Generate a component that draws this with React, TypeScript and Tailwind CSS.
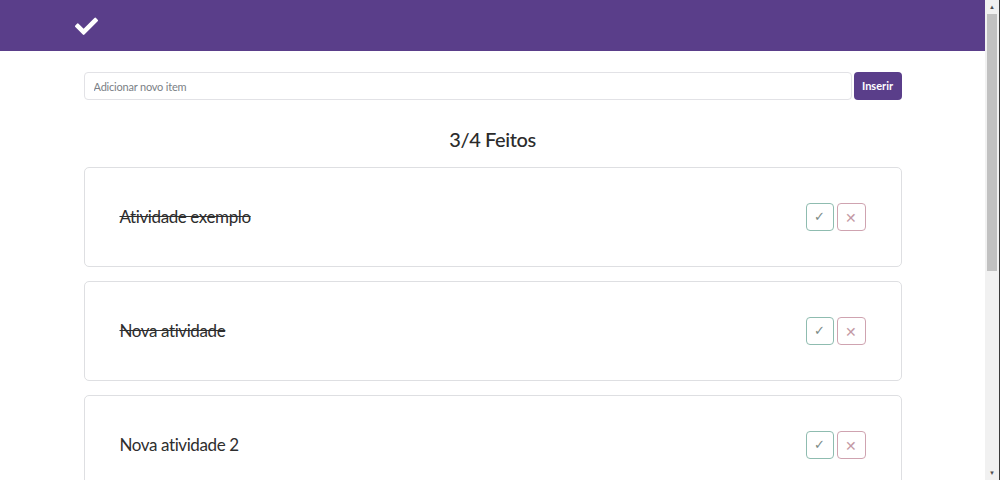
import { useState } from "react";

type Item = {
  id: number;
  text: string;
  done: boolean;
};

const initialItems: Item[] = [
  { id: 1, text: "Atividade exemplo", done: true },
  { id: 2, text: "Nova atividade", done: true },
  { id: 3, text: "Nova atividade 2", done: false },
  { id: 4, text: "Nova atividade 3", done: true },
];

function CheckIcon() {
  return (
    <svg width="23" height="18" viewBox="0 0 512 400" fill="white">
      <path d="M173.9 389.4 7.5 223a25.6 25.6 0 0 1 0-36.2l36.2-36.2a25.6 25.6 0 0 1 36.2 0L192 262.7 432.1 22.6a25.6 25.6 0 0 1 36.2 0l36.2 36.2a25.6 25.6 0 0 1 0 36.2L210.1 389.4a25.6 25.6 0 0 1-36.2 0z" />
    </svg>
  );
}

// the reference shows the browser's scrollbar; headless hides it, so keep its gutter
function ScrollGutter() {
  return (
    <div className="flex h-screen w-[15px] shrink-0 flex-col border-r border-[#3a3a3a] bg-[#f1f1f1]">
      <div className="flex h-[14px] items-center justify-center text-[6px] leading-none text-[#505050]">
        ▲
      </div>
      <div className="mx-[2px] h-[257px] bg-[#c1c1c1]" />
      <div className="flex-1" />
      <div className="flex h-[14px] items-center justify-center text-[6px] leading-none text-[#505050]">
        ▼
      </div>
    </div>
  );
}

export default function App() {
  const [items, setItems] = useState<Item[]>(initialItems);
  const [text, setText] = useState("");

  const doneCount = items.filter((item) => item.done).length;

  function addItem() {
    if (!text.trim()) return;
    setItems((prev) => [...prev, { id: Date.now(), text: text.trim(), done: false }]);
    setText("");
  }

  return (
    <div className="flex h-screen overflow-hidden bg-white font-['Lato',sans-serif] text-[#212529]">
      <div className="min-w-0 flex-1 overflow-hidden">
        <header className="flex h-[51px] items-center bg-[#5a3e8a] pl-[75px]">
          <CheckIcon />
        </header>

        <main className="mx-auto w-[818px] pb-10">
          <div className="mt-[21px] flex gap-[2px]">
            <input
              value={text}
              onChange={(e) => setText(e.target.value)}
              placeholder="Adicionar novo item"
              className="h-[28px] flex-1 rounded-[4px] border border-[#e2e2e6] px-[9px] text-[11px] tracking-[-0.2px] text-[#495057] placeholder:text-[#7b7f86] focus:outline-none"
            />
            <button
              type="button"
              onClick={addItem}
              className="h-[28px] w-[48px] rounded-[4px] bg-[#5a3e8a] text-[11px] font-bold text-white"
            >
              Inserir
            </button>
          </div>

          <h1 className="mt-[24px] text-center text-[20px] font-medium tracking-[-0.4px] text-[#2b2b2b]">
            {doneCount}/{items.length} Feitos
          </h1>

          <ul className="mt-[13px] flex flex-col gap-[14px]">
            {items.map((item) => (
              <li
                key={item.id}
                className="flex h-[100px] items-center justify-between rounded-[5px] border border-[#dedfe2] pl-[35px] pr-[35px]"
              >
                <span
                  className={`text-[17px] tracking-[-0.4px] text-[#2e2e2e] ${item.done ? "line-through" : ""}`}
                >
                  {item.text}
                </span>
                <div className="flex gap-[3px]">
                  <button
                    type="button"
                    onClick={() =>
                      setItems((prev) =>
                        prev.map((p) => (p.id === item.id ? { ...p, done: !p.done } : p)),
                      )
                    }
                    className="flex h-[28px] w-[28px] items-center justify-center rounded-[4px] border border-[#8fbcb0] text-[13px] text-[#7c8a86]"
                  >
                    ✓
                  </button>
                  <button
                    type="button"
                    onClick={() => setItems((prev) => prev.filter((p) => p.id !== item.id))}
                    className="flex h-[28px] w-[29px] items-center justify-center rounded-[4px] border border-[#cfa3b0] text-[14px] text-[#c49aa6]"
                  >
                    ✕
                  </button>
                </div>
              </li>
            ))}
          </ul>
        </main>
      </div>
      <ScrollGutter />
    </div>
  );
}
